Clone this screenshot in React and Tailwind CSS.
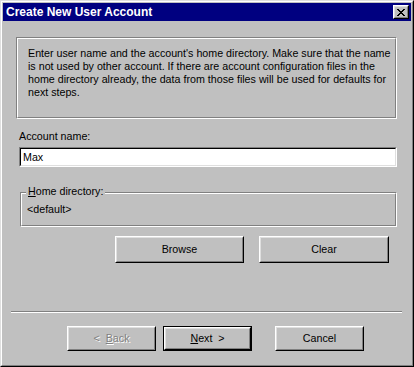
import React from 'react';

const font = { fontFamily: '"Liberation Sans", Arial, sans-serif' };

function Raised({ className = '', children }) {
  return (
    <div className={`border border-t-white border-l-white border-b-black border-r-black ${className}`}>
      <div className="w-full h-full border border-t-[#dfdfdf] border-l-[#dfdfdf] border-b-[#808080] border-r-[#808080] flex items-center justify-center">
        {children}
      </div>
    </div>
  );
}

function Etched({ className = '', children }) {
  return (
    <div className={`border border-t-[#808080] border-l-[#808080] border-b-white border-r-white ${className}`}>
      <div className="w-full h-full border border-t-white border-l-white border-b-[#808080] border-r-[#808080]">
        {children}
      </div>
    </div>
  );
}

function Button({ children, className = '', isDefault }) {
  if (isDefault) {
    return (
      <div className={`border border-black ${className}`}>
        <Raised className="w-full h-full">{children}</Raised>
      </div>
    );
  }
  return <Raised className={className}>{children}</Raised>;
}

export default function App() {
  return (
    <div className="w-[414px] h-[367px] text-[10.7px] leading-[13px] text-black" style={font}>
      <div className="w-full h-full bg-[#c0c0c0] border border-t-[#dfdfdf] border-l-[#dfdfdf] border-b-black border-r-black">
        <div className="w-full h-full border border-t-white border-l-white border-b-[#808080] border-r-[#808080] p-px flex flex-col">
          {/* title bar */}
          <div className="h-[18px] bg-[#000080] flex items-center justify-between pl-[3px] pr-[2px]">
            <span className="text-white font-bold text-[12px] leading-[14px]">Create New User Account</span>
            <Raised className="w-[16px] h-[14px] bg-[#c0c0c0]">
              <svg width="8" height="7" viewBox="0 0 8 7" shapeRendering="crispEdges">
                <path d="M0 0h2v1H0zM6 0h2v1H6zM1 1h2v1H1zM5 1h2v1H5zM2 2h4v1H2zM3 3h2v1H3zM2 4h4v1H2zM1 5h2v1H1zM5 5h2v1H5zM0 6h2v1H0zM6 6h2v1H6z" fill="#000" />
              </svg>
            </Raised>
          </div>

          {/* content */}
          <div className="flex flex-col pt-[16px] pl-[13px] pr-[14px]">
            <Etched className="h-[82px]">
              <div className="pt-[8px] pl-[10px] whitespace-nowrap">
                Enter user name and the account's home directory. Make sure that the name<br />
                is not used by other account. If there are account configuration files in the<br />
                home directory already, the data from those files will be used for defaults for<br />
                next steps.
              </div>
            </Etched>

            <div className="mt-[11px] pl-[3px]">Account name:</div>
            <div className="mt-[4px] ml-[3px] h-[20px] border border-t-[#808080] border-l-[#808080] border-b-white border-r-white">
              <div className="h-full border border-t-black border-l-black border-b-[#dfdfdf] border-r-[#dfdfdf] bg-white flex items-center pl-[2px]">
                Max
              </div>
            </div>

            <div className="relative mt-[25px] ml-[4px]">
              <Etched className="h-[35px]">
                <div className="pt-[9px] pl-[5px]">&lt;default&gt;</div>
              </Etched>
              <span className="absolute left-[6px] top-[-7px] px-[2px] bg-[#c0c0c0]">
                <span className="underline">H</span>ome directory:
              </span>
            </div>

            <div className="mt-[9px] flex justify-end gap-[15px] pr-[8px]">
              <Button className="w-[129px] h-[27px]">Browse</Button>
              <Button className="w-[130px] h-[27px]">Clear</Button>
            </div>
          </div>

          <div className="mt-[48px] ml-[8px] mr-[9px] h-[2px] border-t border-t-[#808080] border-b border-b-white" />

          <div className="mt-[13px] flex pl-[64px]">
            <Button className="w-[89px] h-[25px]">
              <span className="text-[#808080] [text-shadow:1px_1px_0_#fff]">&lt;&nbsp;&nbsp;<span className="underline">B</span>ack</span>
            </Button>
            <Button isDefault className="ml-[7px] w-[89px] h-[25px]">
              <span><span className="underline">N</span>ext&nbsp;&nbsp;&gt;</span>
            </Button>
            <Button className="ml-[23px] w-[89px] h-[25px]">Cancel</Button>
          </div>
        </div>
      </div>
    </div>
  );
}
